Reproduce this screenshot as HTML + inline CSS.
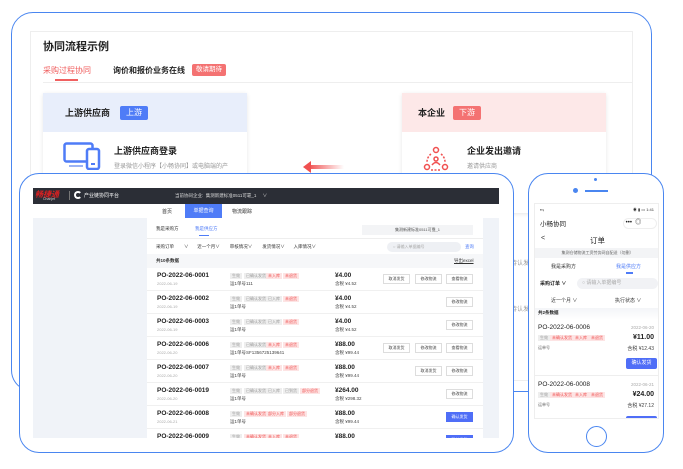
<!DOCTYPE html>
<html><head><meta charset="utf-8"><style>
*{margin:0;padding:0;box-sizing:border-box}
body{width:683px;height:469px;background:#fff;position:relative;overflow:hidden;font-family:"Liberation Sans","Noto Sans CJK SC",sans-serif;color:#222}
.a{position:absolute;white-space:nowrap}
.tag{position:absolute;font-size:4px;line-height:6px;height:6px;padding:0 2px;background:#eee;color:#999}
.tr{background:#fde4e4;color:#f05050}
.btn{position:absolute;width:27px;height:10px;border:1px solid #ddd;background:#fff;font-size:4px;line-height:8px;text-align:center;color:#444}
.bb{background:#4f6ef7;border-color:#4f6ef7;color:#fff}
.po{font-size:6.5px;font-weight:bold;color:#222}
.dt{font-size:4px;color:#aaa}
.sm{font-size:4.5px;color:#444}
</style></head><body>
<!-- background frame -->
<div class="a" style="left:11px;top:12px;width:641px;height:380px;border:1.5px solid #4a86f0;border-radius:22px"></div>
<div class="a" style="left:30px;top:31px;width:603px;height:350px;border:1px solid #eee;background:#fff"></div>
<div class="a" style="left:43px;top:38px;font-size:11px;font-weight:bold">协同流程示例</div>
<div class="a" style="left:43px;top:65px;font-size:8px;color:#f06060">采购过程协同</div>
<div class="a" style="left:55px;top:79px;width:23px;height:2px;background:#f06060"></div>
<div class="a" style="left:113px;top:65px;font-size:8px;font-weight:bold">询价和报价业务在线</div>
<div class="a" style="left:192px;top:64px;width:34px;height:12px;background:#f47272;border-radius:2px;color:#fff;font-size:6.5px;line-height:12px;text-align:center">敬请期待</div>
<div class="a" style="left:43px;top:82px;width:590px;height:1px;background:#eee"></div>
<!-- upstream card -->
<div class="a" style="left:43px;top:93px;width:204px;height:120px;background:#fff;box-shadow:0 1px 4px rgba(0,0,0,.1)"></div>
<div class="a" style="left:43px;top:93px;width:204px;height:39px;background:#e8eefb"></div>
<div class="a" style="left:65px;top:106px;font-size:9px;font-weight:bold">上游供应商</div>
<div class="a" style="left:120px;top:106px;width:28px;height:14px;background:#4f7cf7;border-radius:2px;color:#fff;font-size:8px;line-height:14px;text-align:center">上游</div>
<svg class="a" style="left:63px;top:142px" width="38" height="28" viewBox="0 0 38 28"><rect x="1.5" y="1.5" width="28" height="18" rx="2" fill="none" stroke="#4f7cf7" stroke-width="2.5"/><rect x="6" y="23" width="14" height="2" fill="#9cb4f5"/><rect x="24" y="7" width="12" height="20" rx="2" fill="#fff" stroke="#4f7cf7" stroke-width="2.5"/><rect x="28" y="21" width="4" height="2" fill="#4f7cf7"/></svg>
<div class="a" style="left:114px;top:144px;font-size:9px;font-weight:bold">上游供应商登录</div>
<div class="a" style="left:114px;top:161px;font-size:6px;color:#999">登录微信小程序【小畅协同】或电脑端的产</div>
<!-- arrow -->
<div class="a" style="left:308px;top:165px;width:36px;height:4px;background:linear-gradient(90deg,#f05050,rgba(240,80,80,0))"></div>
<svg class="a" style="left:303px;top:161px" width="8" height="12"><path d="M8 0L0 6L8 12Z" fill="#f05050"/></svg>
<!-- downstream card -->
<div class="a" style="left:402px;top:93px;width:204px;height:120px;background:#fff;box-shadow:0 1px 4px rgba(0,0,0,.1)"></div>
<div class="a" style="left:402px;top:93px;width:204px;height:39px;background:#fde8e8"></div>
<div class="a" style="left:418px;top:106px;font-size:9px;font-weight:bold">本企业</div>
<div class="a" style="left:453px;top:106px;width:28px;height:14px;background:#f47272;border-radius:2px;color:#fff;font-size:8px;line-height:14px;text-align:center">下游</div>
<svg class="a" style="left:423px;top:146px" width="26" height="26" viewBox="0 0 26 26" fill="none" stroke="#f05050" stroke-width="1.5"><circle cx="13" cy="4" r="2.5"/><circle cx="4" cy="21" r="2.5"/><circle cx="22" cy="21" r="2.5"/><path d="M8 8A10 10 0 0 0 4 16M18 8A10 10 0 0 1 22 16M8 24H18" stroke-dasharray="2 1.5"/><circle cx="13" cy="13" r="2"/><path d="M9 19Q13 14 17 19"/></svg>
<div class="a" style="left:467px;top:144px;font-size:9px;font-weight:bold">企业发出邀请</div>
<div class="a" style="left:467px;top:161px;font-size:6px;color:#999">邀请供应商</div>
<div class="a" style="left:511px;top:258px;font-size:6px;color:#999">待认发</div>
<div class="a" style="left:511px;top:304px;font-size:6px;color:#999">待认发</div>

<!-- laptop -->
<div class="a" style="left:19px;top:173px;width:495px;height:280px;border:1.5px solid #4a86f0;border-radius:20px;background:#fff"></div>
<div class="a" style="left:33px;top:188px;width:466px;height:250px;background:#f0f3f8;overflow:hidden">
 <div class="a" style="left:0;top:0;width:466px;height:16px;background:#2b2e36"></div>
 <div class="a" style="left:2px;top:1px;font-size:8px;color:#e02020;font-style:italic;font-weight:bold">畅捷通</div>
 <div class="a" style="left:10px;top:9px;font-size:3.5px;color:#ccc">Chanjet</div>
 <div class="a" style="left:36px;top:3px;width:1px;height:9px;background:#777"></div>
 <div class="a" style="left:41px;top:3px;width:8px;height:8px;border:2px solid #fff;border-radius:50%;border-right-color:transparent"></div>
 <div class="a" style="left:51px;top:4px;font-size:5px;color:#fff">产业链协同平台</div>
 <div class="a" style="left:142px;top:5px;font-size:4.5px;color:#ddd">当前协同企业:&nbsp; 集测新建标准0511可靠_1&nbsp;&nbsp;&nbsp;&nbsp;&nbsp;∨</div>
 <div class="a" style="left:0;top:16px;width:466px;height:14px;background:#fff"></div>
 <div class="a" style="left:129px;top:20px;font-size:5px;color:#333">首页</div>
 <div class="a" style="left:152px;top:16px;width:37px;height:14px;background:#4f7cf7;color:#fff;font-size:5px;line-height:14px;text-align:center">单据查询</div>
 <div class="a" style="left:199px;top:20px;font-size:5px;color:#333">物流跟踪</div>
 <div class="a" style="left:114px;top:30px;width:336px;height:230px;background:#fff"></div>
 <div class="a" style="left:123px;top:38px;font-size:4.5px;color:#333">我是采购方</div>
 <div class="a" style="left:162px;top:38px;font-size:4.5px;color:#4f7cf7">我是供应方</div>
 <div class="a" style="left:166px;top:47px;width:10px;height:1px;background:#4f7cf7"></div>
 <div class="a" style="left:329px;top:37px;width:111px;height:10px;background:#f3f4f6;font-size:4px;line-height:10px;text-align:center;color:#555">集测新建标准0511可靠_1</div>
 <div class="a" style="left:114px;top:50px;width:336px;height:1px;background:#eee"></div>
 <div class="a" style="left:123px;top:56px;font-size:4.5px;color:#333">采购订单&nbsp;&nbsp;&nbsp;&nbsp;&nbsp;&nbsp;&nbsp;&nbsp;∨&nbsp;&nbsp;&nbsp;&nbsp;&nbsp;&nbsp;&nbsp;近一个月∨&nbsp;&nbsp;&nbsp;&nbsp;&nbsp;&nbsp;&nbsp;&nbsp;审核情况∨&nbsp;&nbsp;&nbsp;&nbsp;&nbsp;&nbsp;&nbsp;&nbsp;发货情况∨&nbsp;&nbsp;&nbsp;&nbsp;&nbsp;&nbsp;&nbsp;入库情况∨</div>
 <div class="a" style="left:354px;top:54px;width:74px;height:10px;background:#eef0f4;border-radius:5px;font-size:4px;line-height:10px;color:#aaa;padding-left:6px">○ 请输入单据编号</div>
 <div class="a" style="left:432px;top:56px;font-size:4.5px;color:#4f7cf7">查询</div>
 <div class="a" style="left:114px;top:66px;width:336px;height:14px;background:#f6f7f9"></div>
 <div class="a" style="left:123px;top:70px;font-size:4.5px;color:#333;font-weight:bold">共10条数据</div>
 <div class="a" style="left:421px;top:70px;font-size:4.5px;color:#333;text-decoration:underline">导出excel</div>
</div>
<!-- rows -->
<div class="a" style="left:147px;top:268px;width:336px;height:170px;overflow:hidden">
 <div class="a" style="top:0;left:0;width:336px">
  <div style="position:relative;height:23px;border-bottom:1px solid #f0f0f0"><div class="a po" style="left:10px;top:4px">PO-2022-06-0001</div><div class="a dt" style="left:10px;top:13px">2022-06-19</div><span class="tag" style="left:83px;top:5px">生效</span><span class="tag" style="left:97px;top:5px">已确认发货</span><span class="tag tr" style="left:119px;top:5px">未入库</span><span class="tag tr" style="left:136px;top:5px">未退货</span><div class="a sm" style="left:83px;top:13px">运1单号111</div><div class="a po" style="left:188px;top:4px">¥4.00</div><div class="a sm" style="left:188px;top:13px">含税 ¥4.52</div><div class="btn" style="left:236px;top:6px">取消发货</div><div class="btn" style="left:268px;top:6px">修改物流</div><div class="btn" style="left:299px;top:6px">查看物流</div></div>
  <div style="position:relative;height:23px;border-bottom:1px solid #f0f0f0"><div class="a po" style="left:10px;top:4px">PO-2022-06-0002</div><div class="a dt" style="left:10px;top:13px">2022-06-19</div><span class="tag" style="left:83px;top:5px">生效</span><span class="tag" style="left:97px;top:5px">已确认发货</span><span class="tag" style="left:119px;top:5px">已入库</span><span class="tag tr" style="left:136px;top:5px">未退货</span><div class="a sm" style="left:83px;top:13px">运1单号</div><div class="a po" style="left:188px;top:4px">¥4.00</div><div class="a sm" style="left:188px;top:13px">含税 ¥4.52</div><div class="btn" style="left:299px;top:6px">修改物流</div></div>
  <div style="position:relative;height:23px;border-bottom:1px solid #f0f0f0"><div class="a po" style="left:10px;top:4px">PO-2022-06-0003</div><div class="a dt" style="left:10px;top:13px">2022-06-19</div><span class="tag" style="left:83px;top:5px">生效</span><span class="tag" style="left:97px;top:5px">已确认发货</span><span class="tag" style="left:119px;top:5px">已入库</span><span class="tag tr" style="left:136px;top:5px">未退货</span><div class="a sm" style="left:83px;top:13px">运1单号</div><div class="a po" style="left:188px;top:4px">¥4.00</div><div class="a sm" style="left:188px;top:13px">含税 ¥4.52</div><div class="btn" style="left:299px;top:6px">修改物流</div></div>
  <div style="position:relative;height:23px;border-bottom:1px solid #f0f0f0"><div class="a po" style="left:10px;top:4px">PO-2022-06-0006</div><div class="a dt" style="left:10px;top:13px">2022-06-20</div><span class="tag" style="left:83px;top:5px">生效</span><span class="tag" style="left:97px;top:5px">已确认发货</span><span class="tag tr" style="left:119px;top:5px">未入库</span><span class="tag tr" style="left:136px;top:5px">未退货</span><div class="a sm" style="left:83px;top:13px">运1单号SF1356725139641</div><div class="a po" style="left:188px;top:4px">¥88.00</div><div class="a sm" style="left:188px;top:13px">含税 ¥99.44</div><div class="btn" style="left:236px;top:6px">取消发货</div><div class="btn" style="left:268px;top:6px">修改物流</div><div class="btn" style="left:299px;top:6px">查看物流</div></div>
  <div style="position:relative;height:23px;border-bottom:1px solid #f0f0f0"><div class="a po" style="left:10px;top:4px">PO-2022-06-0007</div><div class="a dt" style="left:10px;top:13px">2022-06-20</div><span class="tag" style="left:83px;top:5px">生效</span><span class="tag" style="left:97px;top:5px">已确认发货</span><span class="tag tr" style="left:119px;top:5px">未入库</span><span class="tag tr" style="left:136px;top:5px">未退货</span><div class="a sm" style="left:83px;top:13px">运1单号</div><div class="a po" style="left:188px;top:4px">¥88.00</div><div class="a sm" style="left:188px;top:13px">含税 ¥99.44</div><div class="btn" style="left:268px;top:6px">取消发货</div><div class="btn" style="left:299px;top:6px">修改物流</div></div>
  <div style="position:relative;height:23px;border-bottom:1px solid #f0f0f0"><div class="a po" style="left:10px;top:4px">PO-2022-06-0019</div><div class="a dt" style="left:10px;top:13px">2022-06-20</div><span class="tag" style="left:83px;top:5px">生效</span><span class="tag" style="left:97px;top:5px">已确认发货</span><span class="tag" style="left:119px;top:5px">已入库</span><span class="tag" style="left:136px;top:5px">已到货</span><span class="tag tr" style="left:153px;top:5px">部分退货</span><div class="a sm" style="left:83px;top:13px">运1单号</div><div class="a po" style="left:188px;top:4px">¥264.00</div><div class="a sm" style="left:188px;top:13px">含税 ¥298.32</div><div class="btn" style="left:299px;top:6px">修改物流</div></div>
  <div style="position:relative;height:23px;border-bottom:1px solid #f0f0f0"><div class="a po" style="left:10px;top:4px">PO-2022-06-0008</div><div class="a dt" style="left:10px;top:13px">2022-06-21</div><span class="tag" style="left:83px;top:5px">生效</span><span class="tag tr" style="left:97px;top:5px">未确认发货</span><span class="tag tr" style="left:119px;top:5px">部分入库</span><span class="tag tr" style="left:140px;top:5px">部分退货</span><div class="a sm" style="left:83px;top:13px">运1单号</div><div class="a po" style="left:188px;top:4px">¥88.00</div><div class="a sm" style="left:188px;top:13px">含税 ¥99.44</div><div class="btn bb" style="left:299px;top:6px">确认发货</div></div>
  <div style="position:relative;height:23px"><div class="a po" style="left:10px;top:4px">PO-2022-06-0009</div><span class="tag" style="left:83px;top:5px">生效</span><span class="tag tr" style="left:97px;top:5px">未确认发货</span><span class="tag tr" style="left:119px;top:5px">未入库</span><span class="tag tr" style="left:136px;top:5px">未退货</span><div class="a po" style="left:188px;top:4px">¥88.00</div><div class="btn bb" style="left:299px;top:6px">确认发货</div></div>
 </div>
</div>

<!-- phone -->
<div class="a" style="left:528px;top:173px;width:136px;height:280px;border:1.5px solid #4a86f0;border-radius:20px;background:#fff"></div>
<div class="a" style="left:594px;top:178px;width:3px;height:3px;border-radius:50%;background:#4a86f0"></div>
<div class="a" style="left:573px;top:188px;width:5px;height:5px;border-radius:50%;background:#4a86f0"></div>
<div class="a" style="left:585px;top:190px;width:23px;height:1.5px;background:#4a86f0"></div>
<div class="a" style="left:586px;top:426px;width:21px;height:21px;border-radius:50%;border:1.5px solid #4a86f0"></div>
<div class="a" style="left:534px;top:203px;width:125px;height:216px;border:1px solid #eee;overflow:hidden;background:#fff">
 <div class="a" style="left:5px;top:3px;font-size:4px;color:#333">▪▪ᵢₗ</div>
 <div class="a" style="right:4px;top:3px;font-size:4px;color:#333">◉ ▮ ▭ 1:41</div>
 <div class="a" style="left:5px;top:14px;font-size:6.5px;color:#222">小畅协同</div>
 <div class="a" style="left:88px;top:14px;width:34px;height:11px;border:1px solid #eee;border-radius:6px;font-size:6px;line-height:9px;color:#222">&nbsp;•••&nbsp; ◎</div>
 <div class="a" style="left:6px;top:31px;font-size:7px;color:#333">&lt;</div>
 <div class="a" style="left:55px;top:31px;font-size:7.5px;color:#222">订单</div>
 <div class="a" style="left:0;top:44px;width:125px;height:10px;background:#f3f4f6;font-size:4px;line-height:10px;text-align:center;color:#666">集测仓储物流工资劳务网自配送（勿删）</div>
 <div class="a" style="left:16px;top:59px;font-size:5px;color:#333">我是采购方</div>
 <div class="a" style="left:81px;top:59px;font-size:5px;color:#4f7cf7">我是供应方</div>
 <div class="a" style="left:91px;top:68px;width:7px;height:1.5px;background:#4f7cf7"></div>
 <div class="a" style="left:5px;top:76px;font-size:5px;color:#222;font-weight:bold">采购订单 ∨</div>
 <div class="a" style="left:42px;top:74px;width:81px;height:11px;background:#f1f2f5;border-radius:6px;font-size:5px;line-height:11px;color:#aaa;padding-left:5px">○ 请输入单据编号</div>
 <div class="a" style="left:16px;top:93px;font-size:5px;color:#333">近一个月 ∨</div>
 <div class="a" style="left:80px;top:93px;font-size:5px;color:#333">执行状态 ∨</div>
 <div class="a" style="left:0;top:104px;width:125px;height:12px;background:linear-gradient(#f3f5f8,#fff)"></div>
 <div class="a" style="left:3px;top:106px;font-size:4.5px;color:#222;font-weight:bold">共2条数据</div>
 <div class="a" style="left:3px;top:120px;font-size:6.5px;color:#222">PO-2022-06-0006</div>
 <div class="a" style="right:4px;top:121px;font-size:4.5px;color:#aaa">2022-06-20</div>
 <span class="tag" style="left:3px;top:131px">生效</span><span class="tag tr" style="left:15px;top:131px">未确认发货</span><span class="tag tr" style="left:38px;top:131px">未入库</span><span class="tag tr" style="left:54px;top:131px">未退货</span>
 <div class="a" style="right:4px;top:130px;font-size:7px;color:#222;font-weight:bold">¥11.00</div>
 <div class="a" style="left:3px;top:141px;font-size:4px;color:#666">运单号</div>
 <div class="a" style="right:4px;top:141px;font-size:5px;color:#444">含税 ¥12.43</div>
 <div class="a" style="left:91px;top:154px;width:31px;height:11px;background:#4f6ef7;border-radius:2px;font-size:5px;line-height:11px;text-align:center;color:#fff">确认发货</div>
 <div class="a" style="left:0;top:171px;width:125px;height:1px;background:#eee"></div>
 <div class="a" style="left:3px;top:177px;font-size:6.5px;color:#222">PO-2022-06-0008</div>
 <div class="a" style="right:4px;top:178px;font-size:4.5px;color:#aaa">2022-06-21</div>
 <span class="tag" style="left:3px;top:188px">生效</span><span class="tag tr" style="left:15px;top:188px">未确认发货</span><span class="tag tr" style="left:38px;top:188px">未入库</span><span class="tag tr" style="left:54px;top:188px">未退货</span>
 <div class="a" style="right:4px;top:187px;font-size:7px;color:#222;font-weight:bold">¥24.00</div>
 <div class="a" style="left:3px;top:198px;font-size:4px;color:#666">运单号</div>
 <div class="a" style="right:4px;top:198px;font-size:5px;color:#444">含税 ¥27.12</div>
 <div class="a" style="left:91px;top:212px;width:31px;height:11px;background:#4f6ef7;border-radius:2px"></div>
</div>
</body></html>
